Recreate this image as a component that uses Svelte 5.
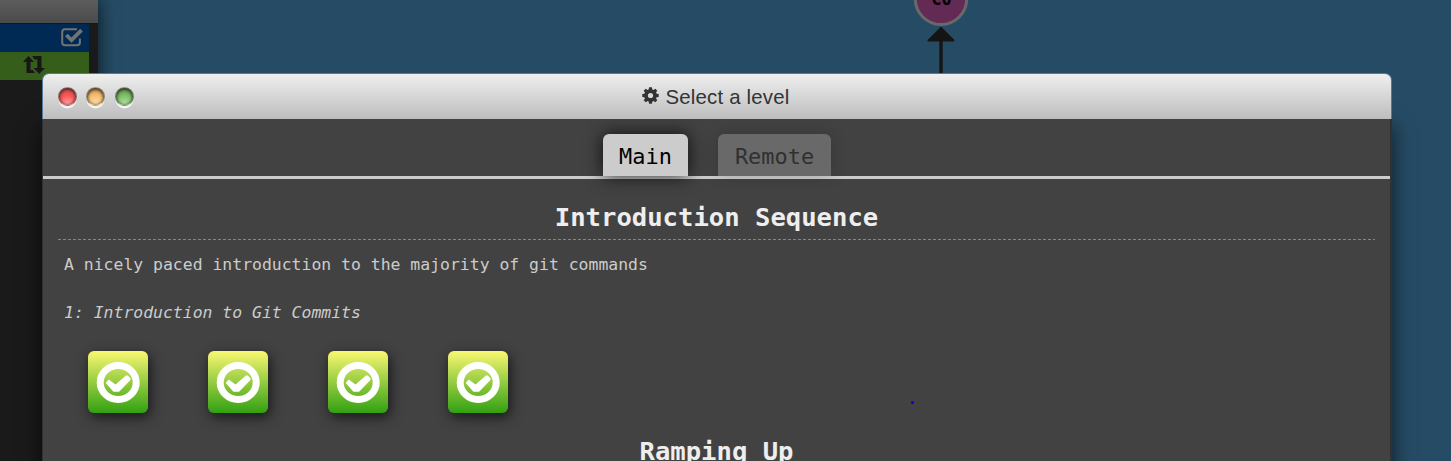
<script>
  const lights = ['red', 'amber', 'green'];
  const tabs = [
    { name: 'Main', active: true },
    { name: 'Remote', active: false }
  ];
  const levels = [1, 2, 3, 4];
</script>

<div class="app">
  <svg class="tree" viewBox="0 0 110 80" width="110" height="80">
    <circle cx="51" cy="-1.2" r="25.7" fill="#632a56" stroke="#696969" stroke-width="3" />
    <text x="51.5" y="5" text-anchor="middle">C0</text>
    <path d="M51 40V80" stroke="#151515" stroke-width="3.4" />
    <path d="M51 28L63.5 40.5H38.5Z" fill="#151515" stroke="#151515" stroke-width="2" stroke-linejoin="round" />
  </svg>

  <aside class="terminal">
    <div class="bar"></div>
    <div class="row blue">
      <svg width="24" height="22" viewBox="0 0 24 22">
        <path d="M17 2.2H5Q2.2 2.2 2.2 5V15.5Q2.2 18.3 5 18.3H17Q19.9 18.3 19.9 15.5V11.5" fill="none" stroke="#737373" stroke-width="2" />
        <path d="M6.3 8L11.5 13L21.5 3.2" fill="none" stroke="#737373" stroke-width="3.8" />
      </svg>
    </div>
    <div class="row lime">
      <svg width="24" height="20" viewBox="0 0 24 20">
        <path d="M6.5 1L12 7H8.5V15H10.8L13 18H4.5V7H1ZM10.2 1H19.5V13H23L17.2 19L11.5 13H15.3V4.5H12.5Z" fill="#171717" />
      </svg>
    </div>
  </aside>

  <section class="window">
    <header>
      <div class="lights">
        {#each lights as color}<i class={color}></i>{/each}
      </div>
      <svg class="gear" width="17" height="17" viewBox="-8.5 -8.5 17 17">
        <g fill="#333">
          {#each [0, 45, 90, 135] as angle}
            <path d="M-1.4 -8.2H1.4L2 -5V5L1.4 8.2H-1.4L-2 5V-5Z" transform="rotate({angle})" />
          {/each}
          <circle r="6.2" />
        </g>
        <circle r="2.6" fill="#d9d9d9" />
      </svg>
      <span>Select a level</span>
    </header>
    <main>
      <nav>
        {#each tabs as tab}
          <button class="tab" class:active={tab.active}>{tab.name}</button>
        {/each}
      </nav>
      <div class="sequence">
        <h2>Introduction Sequence</h2>
        <div class="rule"></div>
        <p>A nicely paced introduction to the majority of git commands</p>
        <p class="level-name">1: Introduction to Git Commits</p>
        <div class="levels">
          {#each levels as level}
            <button class="level" aria-label="Level {level}">
              <svg width="60" height="62" viewBox="0 0 60 62">
                <ellipse cx="30.2" cy="31.5" rx="18" ry="17" fill="none" stroke="#fff" stroke-width="7" />
                <path d="M17.7 32L20.7 28.5L27.5 33.4L37.6 24.8Q39 23.8 40.3 25L42.4 27.2Q43 28.3 42.2 29.2L31.6 40.2Q31 40.8 30 40.8H26.5Q25.5 40.8 25 40.2Z" fill="#fff" />
              </svg>
            </button>
          {/each}
        </div>
        <h2>Ramping Up</h2>
      </div>
      <i class="dot"></i>
    </main>
  </section>
</div>

<style>
  :global(body) { margin: 0; }
  .app {
    position: relative;
    width: 1451px;
    height: 461px;
    overflow: hidden;
    background: #264c65;
    font-family: "DejaVu Sans Mono", monospace;
  }
  .tree { position: absolute; left: 890px; top: 0; }
  .tree text { font: bold 17px "DejaVu Sans Mono", monospace; }
  .terminal {
    width: 98px;
    height: 461px;
    background: #1a1a1a;
    box-shadow: 0 0 18px rgba(0, 0, 0, .75);
  }
  .bar {
    box-sizing: border-box;
    height: 24px;
    background: linear-gradient(#5c5c5c, #4b4b4b);
    border-bottom: 1px solid #161616;
  }
  .row { display: flex; width: 89px; height: 28px; }
  .blue { background: #002a54; justify-content: flex-end; }
  .blue svg { margin: 3px 5px 0 0; }
  .lime { background: #365e1b; }
  .lime svg { margin: 3px 0 0 22px; }
  .window {
    position: absolute;
    left: 42px;
    top: 73px;
    width: 1350px;
    height: 420px;
  }
  header {
    position: relative;
    z-index: 1;
    box-sizing: border-box;
    display: flex;
    align-items: center;
    justify-content: center;
    gap: 6px;
    height: 46px;
    border: 1px solid #54799b;
    border-bottom: 0;
    border-radius: 7px 7px 0 0;
    background: linear-gradient(#f0eff0, #bdbdbd);
    color: #333;
    font: 20.4px/44px "Liberation Sans", Arial, sans-serif;
    padding-right: 2px;
  }
  .gear { margin-top: -2px; }
  header span { letter-spacing: .2px; }
  .lights { position: absolute; left: 14.5px; top: 13px; display: flex; gap: 9.5px; }
  .lights i {
    box-sizing: border-box;
    width: 19px;
    height: 19px;
    border-radius: 50%;
    border: 1.5px solid rgba(115, 115, 115, .7);
    border-bottom-color: transparent;
    box-shadow: 0 3px 0 -.5px #f5f5f5, inset 0 2px 3px rgba(50, 40, 40, .75), inset 0 0 3px rgba(50, 40, 40, .8);
  }
  .red { background: radial-gradient(circle at 50% 100%, #ffb0b0 0, #fb5555 50%, #d94c4c 100%); }
  .amber { background: radial-gradient(circle at 50% 100%, #ffe2b0 0, #f5be70 50%, #cb9450 100%); }
  .green { background: radial-gradient(circle at 50% 100%, #bce7aa 0, #7dbe68 50%, #5a9549 100%); }
  main {
    position: relative;
    box-sizing: border-box;
    height: 374px;
    border: 1px solid #303132;
    border-top: 0;
    border-right-width: 2px;
    background: #424242;
    box-shadow: 0 6px 20px rgba(0, 0, 0, .65);
  }
  nav {
    display: flex;
    justify-content: center;
    gap: 30px;
    padding: 15px 0 0 1px;
    border-bottom: 3px solid #ccc;
  }
  button { border: 0; padding: 0; }
  .tab {
    width: 113px;
    height: 42px;
    border-radius: 6px 6px 0 0;
    background: #696969;
    color: #303030;
    font: 21.93px/46px "DejaVu Sans Mono", monospace;
    box-shadow: 0 0 16px rgba(0, 0, 0, .18);
  }
  .active {
    width: 85px;
    background: #ccc;
    color: #000;
    box-shadow: 0 0 18px rgba(0, 0, 0, .8);
  }
  .sequence { padding: 0 15px; color: #ccc; }
  h2 {
    margin: 0;
    padding-top: 18px;
    height: 42px;
    text-align: center;
    color: #eee;
    font: bold 25.58px/41px "DejaVu Sans Mono", monospace;
  }
  .rule {
    height: 1px;
    background: repeating-linear-gradient(90deg, #858585 0 3px, transparent 3px 5px);
  }
  p { margin: 0; padding: 0 6px; font-size: 16.44px; line-height: 48px; }
  .rule + p { padding-top: 1px; }
  p.level-name { font-style: italic; }
  .levels { display: flex; gap: 60px; padding: 14px 30px 0; }
  .level {
    width: 60px;
    height: 62px;
    border-radius: 6px;
    background: linear-gradient(#f9f871, #32a012);
    box-shadow: 2px 4px 13px rgba(0, 0, 0, .65);
  }
  .level svg { display: block; }
  .dot {
    position: absolute;
    left: 868px;
    top: 282px;
    width: 3px;
    height: 3px;
    border-radius: 50%;
    background: #0000e8;
  }
</style>
